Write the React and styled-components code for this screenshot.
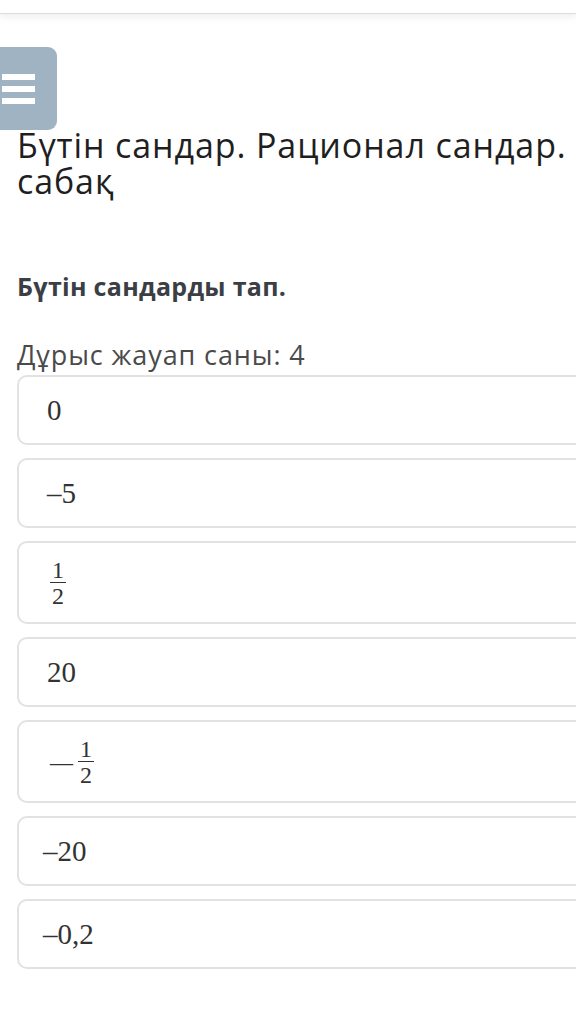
import React from 'react'
import styled, { createGlobalStyle } from 'styled-components'

const GlobalStyle = createGlobalStyle`
  html, body {
    margin: 0;
    padding: 0;
    background: #ffffff;
    overflow: hidden;
  }
  body {
    font-family: "Open Sans", "Noto Sans", sans-serif;
    color: #222;
  }
`

const Page = styled.div`
  width: 576px;
  height: 1036px;
  overflow: hidden;
  display: flex;
  flex-direction: column;
`

const TopBar = styled.div`
  height: 13px;
  flex-shrink: 0;
  background: #fff;
  border-bottom: 1px solid #dcdcdc;
  box-shadow: 0 3px 8px rgba(0, 0, 0, 0.07);
`

const MenuButton = styled.button`
  margin: 33px 0 0 -20px;
  width: 77px;
  height: 83px;
  flex-shrink: 0;
  border: none;
  border-radius: 9px;
  background: #a0b3c2;
  display: flex;
  flex-direction: column;
  align-items: center;
  justify-content: center;
  gap: 6px;
  padding: 0;
`

const MenuBar = styled.span`
  display: block;
  width: 33px;
  height: 6px;
  background: #fff;
`

const Title = styled.h1`
  margin: -3px 0 0;
  padding-left: 17px;
  font-size: 34px;
  letter-spacing: 0.9px;
  line-height: 36px;
  font-weight: 400;
  color: #1f1f1f;
  white-space: nowrap;
`

const Question = styled.h2`
  margin: 70px 0 0;
  padding-left: 17px;
  font-size: 25px;
  letter-spacing: 0.3px;
  line-height: 34px;
  font-weight: 700;
  color: #3b3f45;
`

const Count = styled.p`
  margin: 35px 0 0;
  padding-left: 17px;
  font-size: 27px;
  letter-spacing: 0.9px;
  line-height: 34px;
  color: #4a4a4a;
`

const Options = styled.div`
  margin: 3px 0 0 17px;
  display: flex;
  flex-direction: column;
  gap: 13px;
`

const Card = styled.div`
  width: 620px;
  height: ${(p) => (p.$tall ? 83 : 70)}px;
  box-sizing: border-box;
  border: 2px solid #e2e2e2;
  border-radius: 10px;
  background: #fff;
  display: flex;
  align-items: center;
  padding-left: ${(p) => p.$pad || 28}px;
  font-family: "Liberation Serif", "DejaVu Serif", serif;
  font-size: 29px;
  color: #333;
`

const Frac = styled.span`
  display: inline-flex;
  flex-direction: column;
  align-items: center;
  font-size: 24px;
  line-height: 20px;
  margin-left: ${(p) => p.$gap || 3}px;
`

const Num = styled.span`
  padding: 0 2px 2px;
  border-bottom: 1.5px solid #333;
`

const Den = styled.span`
  padding-top: 3px;
`

const Minus = styled.span`
  font-size: 23px;
  margin-top: 2px;
`

const Fraction = ({ n, d, gap }) => (
  <Frac $gap={gap}>
    <Num>{n}</Num>
    <Den>{d}</Den>
  </Frac>
)

const App = () => {
  return (
    <Page>
      <GlobalStyle />
      <TopBar />
      <MenuButton aria-label="menu">
        <MenuBar />
        <MenuBar />
        <MenuBar />
      </MenuButton>

      <Title>
        Бүтін сандар. Рационал сандар.
        <br />
        сабақ
      </Title>

      <Question>Бүтін сандарды тап.</Question>
      <Count>Дұрыс жауап саны: 4</Count>

      <Options>
        <Card>0</Card>
        <Card>–5</Card>
        <Card $tall>
          <Fraction n="1" d="2" />
        </Card>
        <Card>20</Card>
        <Card $tall $pad={31}>
          <Minus>—</Minus>
          <Fraction n="1" d="2" gap={5} />
        </Card>
        <Card $pad={24}>–20</Card>
        <Card $pad={24}>–0,2</Card>
      </Options>
    </Page>
  )
}

export default App
